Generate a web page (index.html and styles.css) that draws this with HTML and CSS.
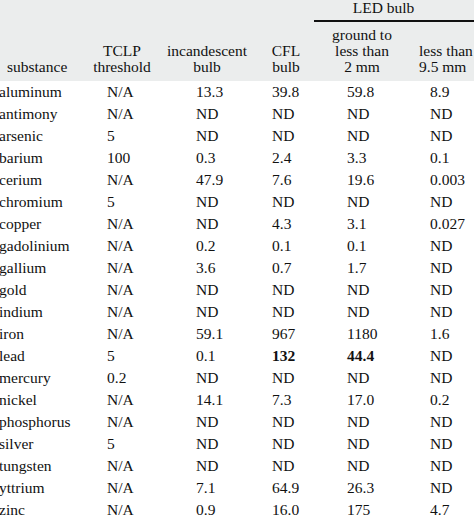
FILE: index.html
```html
<!DOCTYPE html>
<html>
<head>
<meta charset="utf-8">
<link rel="stylesheet" href="styles.css">
</head>
<body>
<div class="table">
  <div class="head">
    <div class="group">LED bulb</div>
    <div class="h c1">substance</div>
    <div class="h c2">TCLP<br>threshold</div>
    <div class="h c3">incandescent<br>bulb</div>
    <div class="h c4">CFL<br>bulb</div>
    <div class="h c5">ground to<br>less than<br>2 mm</div>
    <div class="h c6">less than<br>9.5 mm</div>
  </div>
  <div class="row"><span class="c1">aluminum</span><span class="c2">N/A</span><span class="c3">13.3</span><span class="c4">39.8</span><span class="c5">59.8</span><span class="c6">8.9</span></div>
  <div class="row"><span class="c1">antimony</span><span class="c2">N/A</span><span class="c3">ND</span><span class="c4">ND</span><span class="c5">ND</span><span class="c6">ND</span></div>
  <div class="row"><span class="c1">arsenic</span><span class="c2">5</span><span class="c3">ND</span><span class="c4">ND</span><span class="c5">ND</span><span class="c6">ND</span></div>
  <div class="row"><span class="c1">barium</span><span class="c2">100</span><span class="c3">0.3</span><span class="c4">2.4</span><span class="c5">3.3</span><span class="c6">0.1</span></div>
  <div class="row"><span class="c1">cerium</span><span class="c2">N/A</span><span class="c3">47.9</span><span class="c4">7.6</span><span class="c5">19.6</span><span class="c6">0.003</span></div>
  <div class="row"><span class="c1">chromium</span><span class="c2">5</span><span class="c3">ND</span><span class="c4">ND</span><span class="c5">ND</span><span class="c6">ND</span></div>
  <div class="row"><span class="c1">copper</span><span class="c2">N/A</span><span class="c3">ND</span><span class="c4">4.3</span><span class="c5">3.1</span><span class="c6">0.027</span></div>
  <div class="row"><span class="c1">gadolinium</span><span class="c2">N/A</span><span class="c3">0.2</span><span class="c4">0.1</span><span class="c5">0.1</span><span class="c6">ND</span></div>
  <div class="row"><span class="c1">gallium</span><span class="c2">N/A</span><span class="c3">3.6</span><span class="c4">0.7</span><span class="c5">1.7</span><span class="c6">ND</span></div>
  <div class="row"><span class="c1">gold</span><span class="c2">N/A</span><span class="c3">ND</span><span class="c4">ND</span><span class="c5">ND</span><span class="c6">ND</span></div>
  <div class="row"><span class="c1">indium</span><span class="c2">N/A</span><span class="c3">ND</span><span class="c4">ND</span><span class="c5">ND</span><span class="c6">ND</span></div>
  <div class="row"><span class="c1">iron</span><span class="c2">N/A</span><span class="c3">59.1</span><span class="c4">967</span><span class="c5">1180</span><span class="c6">1.6</span></div>
  <div class="row"><span class="c1">lead</span><span class="c2">5</span><span class="c3">0.1</span><span class="c4 b">132</span><span class="c5 b">44.4</span><span class="c6">ND</span></div>
  <div class="row"><span class="c1">mercury</span><span class="c2">0.2</span><span class="c3">ND</span><span class="c4">ND</span><span class="c5">ND</span><span class="c6">ND</span></div>
  <div class="row"><span class="c1">nickel</span><span class="c2">N/A</span><span class="c3">14.1</span><span class="c4">7.3</span><span class="c5">17.0</span><span class="c6">0.2</span></div>
  <div class="row"><span class="c1">phosphorus</span><span class="c2">N/A</span><span class="c3">ND</span><span class="c4">ND</span><span class="c5">ND</span><span class="c6">ND</span></div>
  <div class="row"><span class="c1">silver</span><span class="c2">5</span><span class="c3">ND</span><span class="c4">ND</span><span class="c5">ND</span><span class="c6">ND</span></div>
  <div class="row"><span class="c1">tungsten</span><span class="c2">N/A</span><span class="c3">ND</span><span class="c4">ND</span><span class="c5">ND</span><span class="c6">ND</span></div>
  <div class="row"><span class="c1">yttrium</span><span class="c2">N/A</span><span class="c3">7.1</span><span class="c4">64.9</span><span class="c5">26.3</span><span class="c6">ND</span></div>
  <div class="row"><span class="c1">zinc</span><span class="c2">N/A</span><span class="c3">0.9</span><span class="c4">16.0</span><span class="c5">175</span><span class="c6">4.7</span></div>
</div>
</body>
</html>
```
FILE: styles.css
```css
html, body {
  margin: 0;
  padding: 0;
  background: #ffffff;
  overflow: hidden;
}
.table {
  width: 479px;
  font-family: "Liberation Serif", "Times New Roman", serif;
  font-size: 15.5px;
  color: #111111;
}
.head {
  display: grid;
  grid-template-columns: 93px 58px 112px 46px 106px 64px;
  grid-template-rows: 22px 59px;
  background: #ebeded;
  line-height: 16px;
}
.group {
  grid-column: 5 / 7;
  grid-row: 1;
  margin-left: 5px;
  padding-right: 26px;
  text-align: center;
  border-bottom: 2px solid #111111;
  box-sizing: border-box;
}
.h {
  grid-row: 2;
  align-self: end;
  text-align: center;
  padding-bottom: 6px;
  white-space: nowrap;
}
.h.c1 {
  text-align: left;
  padding-left: 7px;
}
.h.c6 {
  text-align: left;
  padding-left: 4px;
}
.row {
  display: grid;
  grid-template-columns: 93px 58px 112px 46px 106px 64px;
  height: 22px;
  line-height: 22px;
}
.row span {
  white-space: nowrap;
}
.row .c1 { margin-left: -1px; }
.row .c2 { padding-left: 14px; }
.row .c3 { padding-left: 45px; }
.row .c4 { padding-left: 9px; }
.row .c5 { padding-left: 38px; }
.row .c6 { padding-left: 15px; }
.b { font-weight: bold; }
```
